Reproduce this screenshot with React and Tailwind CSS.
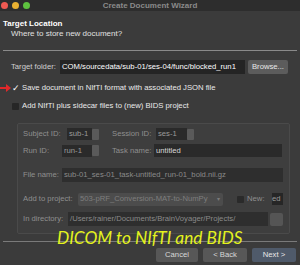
export default function App() {
  const f = { fontFamily: '"Liberation Sans", Arial, sans-serif' };
  return (
    <div className="w-[300px] h-[265px] bg-[#3b3b3b] overflow-hidden relative flex flex-col text-[7.7px] text-[#e6e6e6]" style={f}>
      {/* title bar */}
      <div className="h-[11px] bg-[#2d2d2d] flex items-center relative shrink-0">
        <div className="flex gap-[4px] pl-[1px] items-center">
          <span className="w-[7px] h-[7px] rounded-full bg-[#ee5a52]" />
          <span className="w-[7px] h-[7px] rounded-full bg-[#e9b132]" />
          <span className="w-[7px] h-[7px] rounded-full bg-[#5ec23f]" />
        </div>
        <div className="flex-1 text-center font-bold text-[8px] text-[#8a8a8a] pr-[30px] leading-none">Create Document Wizard</div>
      </div>
      {/* header */}
      <div className="h-[39px] shrink-0 flex flex-col pl-[3px] pt-[8px]">
        <div className="font-bold text-[8px] text-white leading-[9px]">Target Location</div>
        <div className="pl-[8px] mt-[1px] text-[8px] leading-[10px] text-[#e0e0e0]">Where to store new document?</div>
      </div>
      <div className="mx-[3px] h-[1px] bg-[#8a8a8a] shrink-0" />
      {/* target folder */}
      <div className="flex items-center h-[14px] mt-[9px] shrink-0">
        <span className="pl-[11px] w-[60px] text-[#d0d0d0]">Target folder:</span>
        <div className="w-[185px] h-[14px] bg-[#242424] flex items-center pl-[2px] text-white whitespace-nowrap overflow-hidden">COM/sourcedata/sub-01/ses-04/func/blocked_run1</div>
        <div className="ml-[3px] w-[40px] h-[14px] bg-[#5c5c5c] rounded-[2px] flex items-center justify-center text-[#e8e8e8]">Browse...</div>
      </div>
      {/* save row */}
      <div className="flex items-center h-[10px] mt-[9px] shrink-0 relative">
        <svg width="11" height="8" viewBox="0 0 11 8" className="absolute left-0 top-[1px]">
          <path d="M0 3 L6 3 L6 0 L11 4 L6 8 L6 5 L0 5 Z" fill="#e0282a" />
        </svg>
        <span className="ml-[12px] w-[8px] text-[9px] text-white leading-none">✓</span>
        <span className="ml-[2px] text-[#eaeaea]">Save document in NIfTI format with associated JSON file</span>
      </div>
      {/* add row */}
      <div className="flex items-center h-[10px] mt-[8px] shrink-0">
        <span className="ml-[12px] w-[7px] h-[7px] bg-[#262626] rounded-[1px]" />
        <span className="ml-[3px] text-[#eaeaea]">Add NIfTI plus sidecar files to (new) BIDS project</span>
      </div>
      {/* group box */}
      <div className="ml-[17px] w-[273px] h-[111px] mt-[12px] border border-[#4a4a4a] rounded-[2px] bg-[#3e3e3e] shrink-0 flex flex-col text-[#8f8f8f]">
        <div className="flex items-center h-[12px] mt-[4px]">
          <span className="pl-[5px] w-[49px]">Subject ID:</span>
          <div className="w-[25px] h-[12px] bg-[#2a2a2a] flex items-center pl-[2px] text-[#9a9a9a]">sub-1</div>
          <div className="w-[7px] h-[11px] bg-[#5a5a5a] rounded-[1px]" />
          <span className="ml-[13px] w-[44px]">Session ID:</span>
          <div className="w-[31px] h-[12px] bg-[#2a2a2a] flex items-center pl-[2px] text-[#9a9a9a]">ses-1</div>
          <div className="w-[7px] h-[11px] bg-[#5a5a5a] rounded-[1px]" />
        </div>
        <div className="flex items-center h-[13px] mt-[4px]">
          <span className="pl-[5px] w-[44px]">Run ID:</span>
          <div className="w-[30px] h-[12px] bg-[#2a2a2a] flex items-center pl-[2px] text-[#9a9a9a]">run-1</div>
          <div className="w-[7px] h-[11px] bg-[#5a5a5a] rounded-[1px]" />
          <span className="ml-[13px] w-[42px]">Task name:</span>
          <div className="w-[128px] h-[13px] bg-[#2a2a2a] flex items-center pl-[2px] text-[#d8d8d8]">untitled</div>
        </div>
        <div className="flex items-center h-[14px] mt-[11px]">
          <span className="pl-[5px] w-[44px]">File name:</span>
          <div className="w-[221px] h-[14px] bg-[#2e2e2e] flex items-center pl-[2px] text-[#8a8a8a] whitespace-nowrap overflow-hidden">sub-01_ses-01_task-untitled_run-01_bold.nii.gz</div>
        </div>
        <div className="flex items-center h-[14px] mt-[10px]">
          <span className="pl-[5px] w-[60px]">Add to project:</span>
          <div className="w-[145px] h-[13px] bg-[#4c4c4c] rounded-[2px] flex items-center pl-[2px] text-[#7e7e7e] whitespace-nowrap overflow-hidden relative">
            503-pRF_Conversion-MAT-to-NumPy
            <span className="absolute right-[3px] text-[6px] text-[#7a7a7a]">▾</span>
          </div>
          <span className="ml-[14px] w-[7px] h-[7px] bg-[#2a2a2a] rounded-[1px]" />
          <span className="ml-[3px] w-[25px]">New:</span>
          <div className="w-[11px] h-[12px] bg-[#262626] flex items-center text-[#9a9a9a]">ed</div>
        </div>
        <div className="flex items-center h-[14px] mt-[6px]">
          <span className="pl-[5px] w-[50px]">In directory:</span>
          <div className="w-[200px] h-[14px] bg-[#2e2e2e] flex items-center pl-[2px] text-[#8a8a8a] whitespace-nowrap overflow-hidden">/Users/rainer/Documents/BrainVoyager/Projects/</div>
          <div className="ml-[2px] w-[13px] h-[13px] bg-[#555555] rounded-[2px]" />
        </div>
      </div>
      <div className="mx-[3px] h-[1px] bg-[#7a7a7a] mt-[7px] shrink-0" />
      {/* buttons */}
      <div className="flex justify-end gap-[5px] pr-[4px] mt-[6px] shrink-0">
        <div className="w-[42px] h-[14px] bg-[#575757] rounded-[2px] flex items-center justify-center text-[#d8d8d8]">Cancel</div>
        <div className="w-[44px] h-[14px] bg-[#575757] rounded-[2px] flex items-center justify-center text-[#d8d8d8]">&lt; Back</div>
        <div className="w-[44px] h-[14px] bg-[#4f5a6a] rounded-[2px] flex items-center justify-center text-[#e8e8e8]">Next &gt;</div>
      </div>
      {/* overlay caption */}
      <div className="absolute left-[57px] top-[229px] text-[17.3px] italic text-[#e4f21e] leading-none whitespace-nowrap" style={{ fontFamily: 'Lato, "Open Sans", sans-serif' }}>
        DICOM to NIfTI and BIDS
      </div>
    </div>
  );
}
